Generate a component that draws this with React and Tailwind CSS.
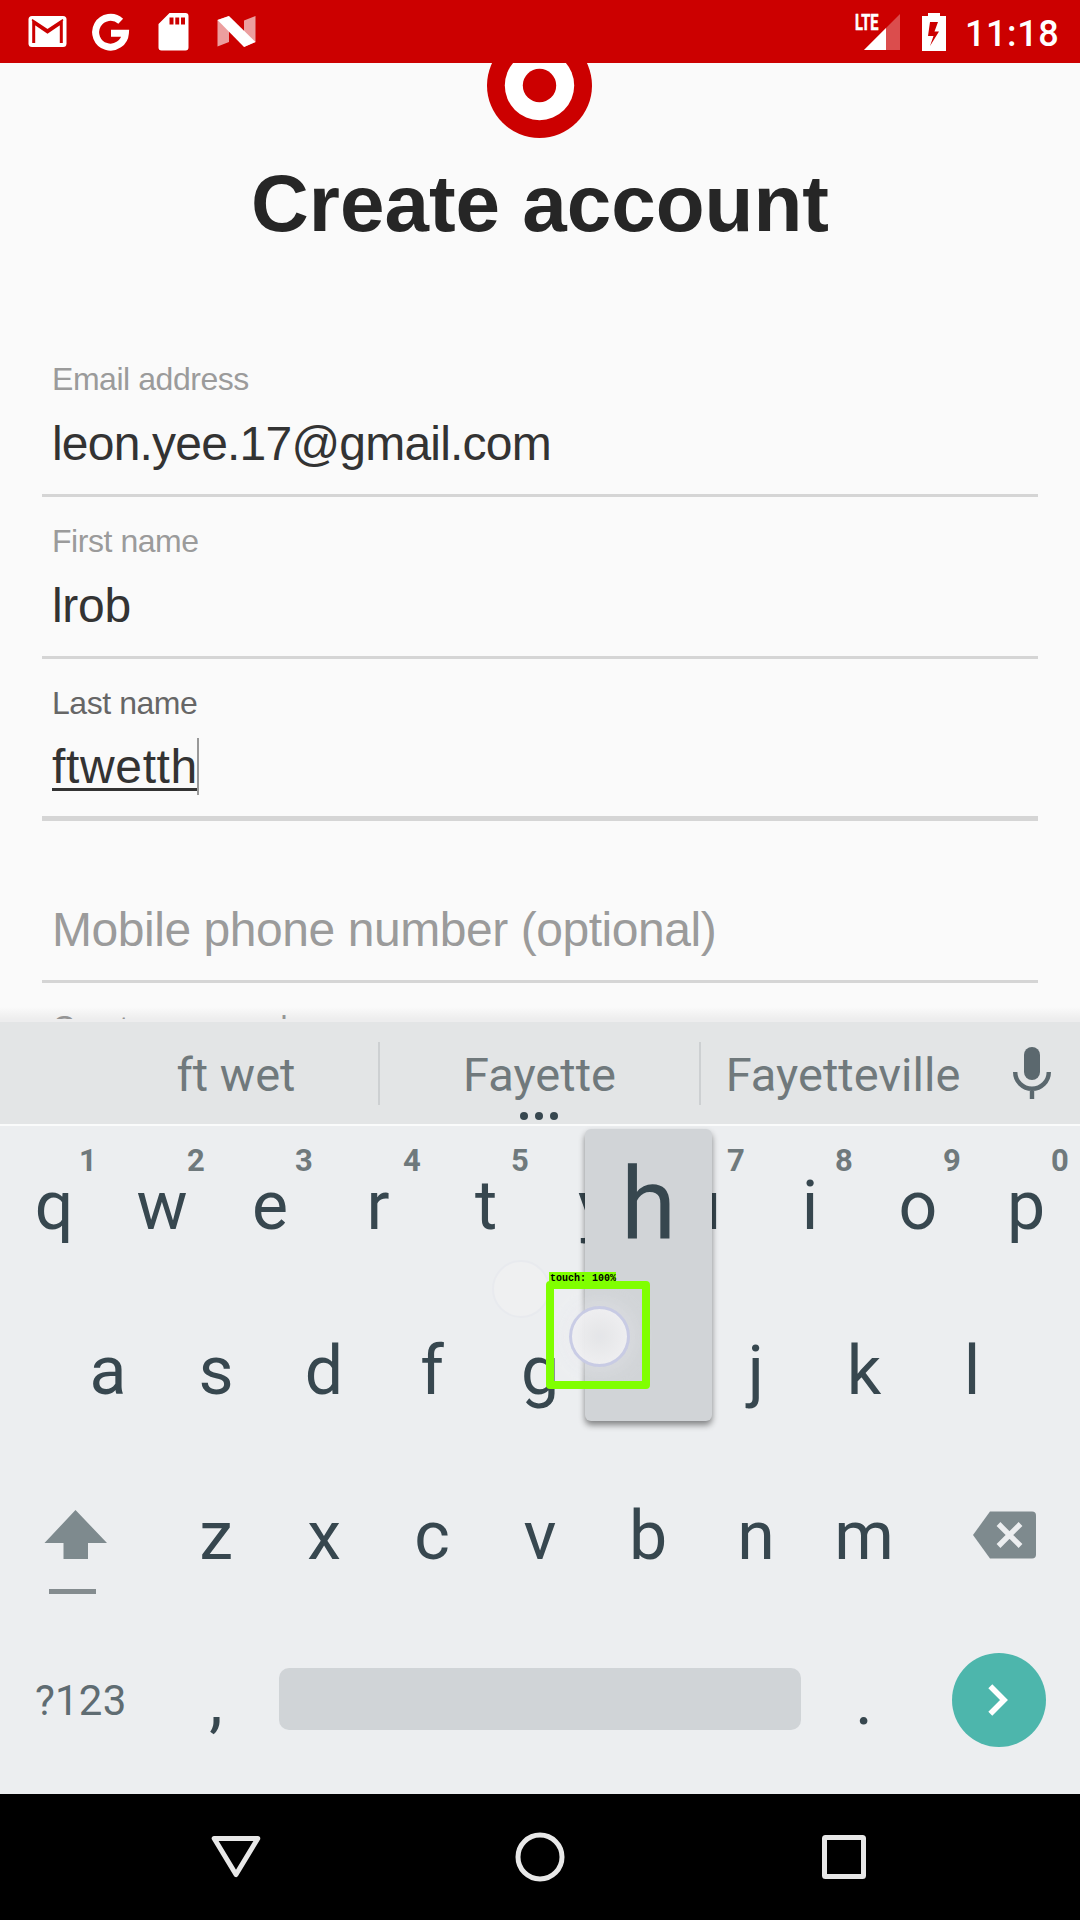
import React from "react";

const row1 = ["q", "w", "e", "r", "t", "y", "u", "i", "o", "p"];
const row2 = ["a", "s", "d", "f", "g", "h", "j", "k", "l"];
const row3 = ["z", "x", "c", "v", "b", "n", "m"];

function StatusBar() {
  return (
    <header className="flex h-[63px] shrink-0 items-center bg-[#cc0000] text-white">
      <svg className="ml-7 h-[31px] w-[39px]" viewBox="0 0 39 31">
        <rect x="0.5" y="0" width="38" height="31" rx="3.5" fill="white" />
        <path d="M5.7 27V6.5L19.5 16L33.3 6.5V27" fill="none" stroke="#cc0000" strokeWidth="3" />
        <path d="M4 3.6L19.5 14L35 3.6" fill="none" stroke="#cc0000" strokeWidth="1.6" />
        <path d="M6 2.4H33L19.5 11.6Z" fill="white" />
      </svg>
      <svg className="ml-[25px] h-[38px] w-[38px]" viewBox="0 0 38 38">
        <path d="M28.7 8.3A14.9 14.9 0 1 0 33.4 20.2H19" fill="none" stroke="white" strokeWidth="7" />
      </svg>
      <svg className="ml-7 h-[38px] w-[31px]" viewBox="0 0 31 38">
        <path
          d="M11.5 0H27.5A3 3 0 0 1 30.5 3V34.5A3 3 0 0 1 27.5 37.5H3.5A3 3 0 0 1 .5 34.5V11ZM11.5 4.5V11.5H15.5V4.5ZM17.3 4.5V11.5H21.2V4.5ZM23 4.5V11.5H27V4.5Z"
          fill="white"
          fillRule="evenodd"
        />
      </svg>
      <svg className="ml-7 h-[31px] w-[39px]" viewBox="0 0 39 31">
        <path d="M.5 4L12 0V26L.5 30.5Z M27 4.5L38.5 0V26L27 31Z" fill="white" fillOpacity=".62" />
        <path d="M.5 4L12 0L38.5 26L27 31Z" fill="white" />
      </svg>
      <svg className="ml-auto h-[38px] w-[46px] overflow-visible" viewBox="0 0 46 38">
        <path d="M9 37L45 1V37Z" fill="white" fillOpacity=".3" />
        <path d="M9 37L31 15V37Z" fill="white" />
        <text
          x="0"
          y="16.5"
          fontFamily="Roboto"
          fontWeight="700"
          fontSize="22"
          fill="white"
          stroke="white"
          strokeWidth="0.6"
          textLength="23.5"
          lengthAdjust="spacingAndGlyphs"
        >
          LTE
        </text>
      </svg>
      <svg className="ml-[21px] h-[38px] w-6" viewBox="0 0 24 38">
        <path d="M6 0H18V3H24V38H0V3H6ZM8 9L6 23H11.5L8 33L17 18.5H12.5L16 9Z" fill="white" fillRule="evenodd" />
      </svg>
      <span className="mr-[22px] ml-[19px] w-[93px] pt-[5px] text-[36px] leading-[40px] font-medium tracking-[0.6px] whitespace-nowrap">
        11:18
      </span>
    </header>
  );
}

function Field({ label, value, valueClass = "", focused = false, placeholder = false, children }) {
  return (
    <div
      className={
        "h-[162px] border-[#d5d5d5] pt-6 pl-[10px] whitespace-nowrap " + (focused ? "border-b-[5px]" : "border-b-[3px]")
      }
    >
      <div
        className={
          "h-10 text-[32px] leading-[40px] tracking-[-0.45px] " + (focused ? "text-[#666666]" : "text-[#9b9b9b]")
        }
      >
        {label}
      </div>
      <div
        className={
          "mt-[15px] flex h-[60px] items-center text-[48px] leading-[60px] " +
          (placeholder ? "text-[#9b9b9b] " : "text-[#333333] ") +
          valueClass
        }
      >
        {value}
        {children}
      </div>
    </div>
  );
}

function Key({ children, hint }) {
  return (
    <div className="relative flex h-[165px] w-[108px] items-center justify-center text-[68px] leading-[80px] text-[#37474f]">
      {children}
      {hint && (
        <span className="absolute top-[22px] left-[70px] w-9 text-center text-[31px] leading-8 font-bold text-[#6f797c]">
          {hint}
        </span>
      )}
    </div>
  );
}

function Suggestions() {
  return (
    <div className="relative flex h-[102px] items-center bg-[#e3e5e6] text-[47px] text-[#70797c]">
      <span className="ml-[94px] w-[284px] pt-[5px] text-center">ft wet</span>
      <span className="h-[63px] w-[2px] bg-[#cdd0d2]" />
      <span className="w-[319px] pt-[5px] text-center">Fayette</span>
      <span className="h-[63px] w-[2px] bg-[#cdd0d2]" />
      <span className="w-[286px] pt-[5px] pr-[2px] text-center">Fayetteville</span>
      <svg className="ml-[26px] h-[52px] w-[38px]" viewBox="0 0 38 52">
        <rect x="11" y="0" width="16" height="33" rx="8" fill="#5b686e" />
        <path d="M2.2 25A16.8 16.8 0 0 0 35.8 25M19 41.5V52" fill="none" stroke="#5b686e" strokeWidth="4.4" />
      </svg>
      <div className="absolute bottom-[4px] left-[520px] flex gap-[7px]">
        <i className="size-2 rounded-full bg-[#37474f]" />
        <i className="size-2 rounded-full bg-[#37474f]" />
        <i className="size-2 rounded-full bg-[#37474f]" />
      </div>
    </div>
  );
}

function Keyboard() {
  return (
    <section className="h-[775px] shrink-0 bg-[#eceef0]">
      <div className="h-[3px] bg-[#ededee]" />
      <Suggestions />
      <div className="h-[2px] bg-[#fafbfb]" />
      <div className="relative -mt-[3px]">
        <div className="flex">
          {row1.map((k, i) => (
            <Key key={k} hint={k === "y" ? null : String((i + 1) % 10)}>
              {k}
            </Key>
          ))}
        </div>
        <div className="flex justify-center">
          {row2.map((k) => (
            <Key key={k}>{k === "h" ? null : k}</Key>
          ))}
        </div>
        <div className="flex">
          <div className="w-[162px] pt-[57px] pl-[44px]">
            <svg className="h-[50px] w-[64px]" viewBox="0 0 64 50">
              <path d="M31.5 0L63 33H44V49H19.5V33H.5Z" fill="#7e8a8e" />
            </svg>
            <div className="mt-[29px] ml-[5px] h-[5px] w-[47px] bg-[#848c8f]" />
          </div>
          {row3.map((k) => (
            <Key key={k}>{k}</Key>
          ))}
          <svg className="mt-[58px] ml-[55px] h-12 w-[63px]" viewBox="0 0 63 48">
            <path d="M17 .5H59A4 4 0 0 1 63 4.5V43.5A4 4 0 0 1 59 47.5H17L0 24Z" fill="#7e8a8e" />
            <path d="M25.5 13L47.5 35M47.5 13L25.5 35" stroke="#eceef0" strokeWidth="5.4" />
          </svg>
        </div>
        <div className="flex h-[165px] items-center">
          <div className="w-[162px] pl-[35px] text-[42px] leading-[50px] tracking-[0.2px] text-[#5f6c72]">?123</div>
          <Key>,</Key>
          <div className="mx-[9px] -mt-[3px] h-[62px] w-[522px] rounded-[10px] bg-[#d0d4d7]" />
          <Key>.</Key>
          <div className="-mt-[2px] ml-[34px] flex size-[94px] items-center justify-center rounded-full bg-[#4db6ac]">
            <svg className="h-8 w-[22px]" viewBox="0 0 22 32">
              <path d="M2.3 2.3L16 16L2.3 29.7" fill="none" stroke="white" strokeWidth="5.6" />
            </svg>
          </div>
        </div>

        {/* Key preview */}
        <div className="absolute top-[6px] left-[585px] flex h-[292px] w-[127px] justify-center rounded-[6px] bg-[#d1d4d7] pt-[16px] text-[100px] leading-[120px] text-[#37474f] shadow-[0_4px_6px_rgba(0,0,0,0.45)]">
          h
        </div>

        {/* Touch trail and detection box */}
        <div className="absolute top-[137px] left-[492px] size-[58px] rounded-full border-2 border-[#e8eaee] bg-[#eff0f1]" />
        <div className="absolute top-[183px] left-[569px] size-[61px] rounded-full border-[3px] border-[#c3c6e3]/90 bg-[radial-gradient(circle,#e6e7e9_0%,#f0f0f2_70%)] opacity-95 shadow-[0_0_18px_6px_rgba(235,236,240,0.35)] blur-[0.6px]" />
        <div className="absolute top-[158px] left-[546px] h-[108px] w-[104px] rounded-[4px] border-8 border-[#80ff00]" />
        <div className="absolute top-[149px] left-[549px] h-[11px] w-[67px] bg-[#80ff00] pl-px font-['Liberation_Mono'] text-[10px] leading-[14px] font-bold whitespace-nowrap text-black">
          touch: 100%
        </div>
      </div>
    </section>
  );
}

export default function App() {
  return (
    <div className="flex h-[1920px] w-[1080px] flex-col overflow-hidden bg-[#fafafa] font-['Roboto',sans-serif]">
      <StatusBar />

      <main className="relative h-[956px] shrink-0 overflow-hidden bg-[#fafafa] font-['Liberation_Sans',sans-serif]">
        <div className="flex h-[75px] items-end justify-center overflow-hidden pr-px">
          <svg className="size-[105px] shrink-0" viewBox="0 0 105 105">
            <circle cx="52.5" cy="52.5" r="52.5" fill="#cc0000" />
            <circle cx="52.5" cy="52.5" r="34.7" fill="white" />
            <circle cx="52.5" cy="52.5" r="16.7" fill="#cc0000" />
          </svg>
        </div>
        <h1 className="h-[130px] pt-px text-center text-[80px] leading-[130px] font-bold text-[#262626]">
          Create account
        </h1>
        <form className="mx-[42px] mt-[67px]">
          <Field label="Email address" value="leon.yee.17@gmail.com" valueClass="tracking-[-0.8px]" />
          <Field label="First name" value="lrob" valueClass="tracking-[-0.3px]" />
          <Field label="Last name" focused valueClass="tracking-[0.65px]">
            <span className="-mt-[5px] h-[51px] border-b-[3px] border-[#333333]">
              <span className="-mt-[3px] block">ftwetth</span>
            </span>
            <span className="-mt-1 -ml-px h-[57px] w-[2px] bg-[#999999]" />
          </Field>
          <Field label="" value="Mobile phone number (optional)" placeholder valueClass="tracking-[-0.45px]" />
          <Field label="Create password" value="" />
        </form>
        <div className="absolute inset-x-0 bottom-0 h-3 bg-gradient-to-b from-black/0 to-black/5" />
      </main>

      <Keyboard />

      <nav className="flex h-[126px] items-center justify-between bg-black px-[211px]">
        <svg className="h-[50px] w-[50px]" viewBox="0 0 50 50" fill="none" stroke="#e8e8e8" strokeWidth="5">
          <path d="M3.2 6.5H46.8L25 42.5Z" strokeLinejoin="round" />
        </svg>
        <svg className="h-[50px] w-[50px]" viewBox="0 0 50 50" fill="none" stroke="#e8e8e8" strokeWidth="5">
          <circle cx="25" cy="25" r="22" />
        </svg>
        <svg className="h-[50px] w-[50px]" viewBox="0 0 50 50" fill="none" stroke="#e8e8e8" strokeWidth="5">
          <rect x="5.5" y="5.5" width="39" height="39" rx="1" />
        </svg>
      </nav>
    </div>
  );
}
